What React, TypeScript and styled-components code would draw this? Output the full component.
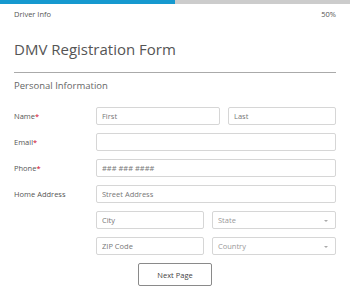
import React from "react";
import styled, { createGlobalStyle } from "styled-components";

const GlobalStyle = createGlobalStyle`
  html, body {
    margin: 0;
    padding: 0;
    background: #fff;
    font-family: "Open Sans", "Liberation Sans", sans-serif;
  }
`;

const Progress = styled.div`
  height: 4px;
  background: #cccccc;
  display: flex;
`;

const ProgressFill = styled.div`
  background: #1699cf;
  height: 100%;
`;

const Page = styled.div`
  padding: 0 14px;
`;

const StepRow = styled.div`
  display: flex;
  justify-content: space-between;
  font-size: 7.5px;
  line-height: 10px;
  color: #555;
  padding-top: 5px;
`;

const Title = styled.h1`
  margin: 20px 0 0;
  font-size: 15px;
  line-height: 20px;
  font-weight: 400;
  color: #555;
`;

const Rule = styled.hr`
  margin: 13px 0 0;
  border: none;
  border-top: 1px solid #aaa;
`;

const SectionTitle = styled.h2`
  margin: 6px 0 14px;
  font-size: 9.5px;
  line-height: 14px;
  font-weight: 400;
  color: #666;
`;

const Form = styled.form`
  display: flex;
  flex-direction: column;
  gap: 8px;
`;

const Row = styled.div`
  display: grid;
  grid-template-columns: 82px 1fr;
  align-items: center;
`;

const Label = styled.label`
  font-size: 7.5px;
  color: #555;
`;

const Required = styled.span`
  color: #d0021b;
`;

const Fields = styled.div<{ $cols?: string }>`
  display: grid;
  grid-template-columns: ${(p) => p.$cols || "1fr"};
  gap: 8px;
`;

const Input = styled.input`
  box-sizing: border-box;
  height: 18px;
  width: 100%;
  border: 1px solid #d6d6d6;
  border-radius: 2px;
  padding: 0 5px;
  font-family: inherit;
  font-size: 7.5px;
  color: #555;
  background: #fff;
  outline: none;

  &::placeholder {
    color: #777;
  }
`;

const SelectBox = styled.div`
  position: relative;
  box-sizing: border-box;
  height: 18px;
  border: 1px solid #d6d6d6;
  border-radius: 2px;
  padding: 0 5px;
  display: flex;
  align-items: center;
  font-size: 7.5px;
  color: #999;

  &::after {
    content: "";
    position: absolute;
    right: 7px;
    top: 8px;
    border-left: 2.5px solid transparent;
    border-right: 2.5px solid transparent;
    border-top: 2.5px solid #aaa;
  }
`;

const Actions = styled.div`
  display: flex;
  justify-content: center;
  padding-top: 0px;
`;

const Button = styled.button`
  width: 74px;
  height: 23px;
  background: #fff;
  border: 1px solid #8a8a8a;
  border-radius: 2px;
  font-family: inherit;
  font-size: 7.5px;
  color: #444;
`;

export default function App() {
  return (
    <>
      <GlobalStyle />
      <Progress>
        <ProgressFill style={{ width: "50%" }} />
      </Progress>
      <Page>
        <StepRow>
          <span>Driver Info</span>
          <span>50%</span>
        </StepRow>
        <Title>DMV Registration Form</Title>
        <Rule />
        <SectionTitle>Personal Information</SectionTitle>
        <Form onSubmit={(e) => e.preventDefault()}>
          <Row>
            <Label>
              Name<Required>*</Required>
            </Label>
            <Fields $cols="124fr 108fr">
              <Input placeholder="First" />
              <Input placeholder="Last" />
            </Fields>
          </Row>
          <Row>
            <Label>
              Email<Required>*</Required>
            </Label>
            <Fields>
              <Input />
            </Fields>
          </Row>
          <Row>
            <Label>
              Phone<Required>*</Required>
            </Label>
            <Fields>
              <Input placeholder="### ### ####" />
            </Fields>
          </Row>
          <Row>
            <Label>Home Address</Label>
            <Fields>
              <Input placeholder="Street Address" />
            </Fields>
          </Row>
          <Row>
            <span />
            <Fields $cols="108fr 124fr">
              <Input placeholder="City" />
              <SelectBox>State</SelectBox>
            </Fields>
          </Row>
          <Row>
            <span />
            <Fields $cols="108fr 124fr">
              <Input placeholder="ZIP Code" />
              <SelectBox>Country</SelectBox>
            </Fields>
          </Row>
          <Actions>
            <Button type="button">Next Page</Button>
          </Actions>
        </Form>
      </Page>
    </>
  );
}
